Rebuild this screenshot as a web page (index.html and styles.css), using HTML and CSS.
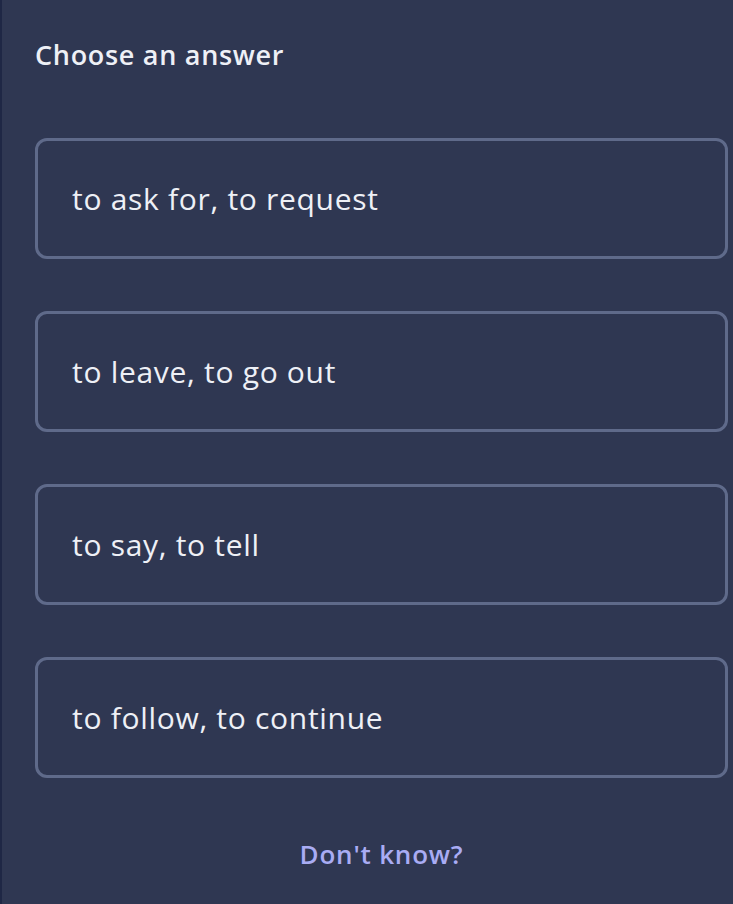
FILE: index.html
```html
<!DOCTYPE html>
<html>

<head>
    <meta charset="utf-8">
    <meta name="viewport" content="width=device-width, initial-scale=1">
    <title>Choose an answer</title>
    <link rel="stylesheet" href="styles.css">
</head>

<body>
    <div class="container">
        <h1 class="title">Choose an answer</h1>
        <div class="answers">
            <button class="answer">to ask for, to request</button>
            <button class="answer">to leave, to go out</button>
            <button class="answer">to say, to tell</button>
            <button class="answer">to follow, to continue</button>
        </div>
        <button class="dont-know">Don't know?</button>
    </div>
</body>

</html>
```

FILE: styles.css
```css
html,
body {
    margin: 0;
    height: 100%;
}

body {
    background-color: #2f3752;
    color: #eef0f6;
    font-family: "Open Sans", "Noto Sans", sans-serif;
    border-left: 2px solid #1f2745;
    box-sizing: border-box;
}

.container {
    padding: 0 5px 0 33px;
}

.title {
    margin: 0;
    padding-top: 39px;
    font-size: 27px;
    font-weight: 600;
    line-height: 32px;
    letter-spacing: 0.7px;
}

.answers {
    display: flex;
    flex-direction: column;
    gap: 52px;
    margin-top: 67px;
}

.answer {
    display: block;
    width: 100%;
    height: 121px;
    padding: 0 0 0 34px;
    background-color: transparent;
    border: 3px solid #5f6a8a;
    border-radius: 12px;
    color: #eef0f6;
    font-family: inherit;
    font-size: 30px;
    letter-spacing: 0.7px;
    text-align: left;
    outline: none;
}

.dont-know {
    display: block;
    margin: 57px auto 0;
    background: none;
    border: none;
    color: #a9acf4;
    font-family: inherit;
    font-size: 26px;
    font-weight: 600;
    letter-spacing: 0.8px;
}
```
